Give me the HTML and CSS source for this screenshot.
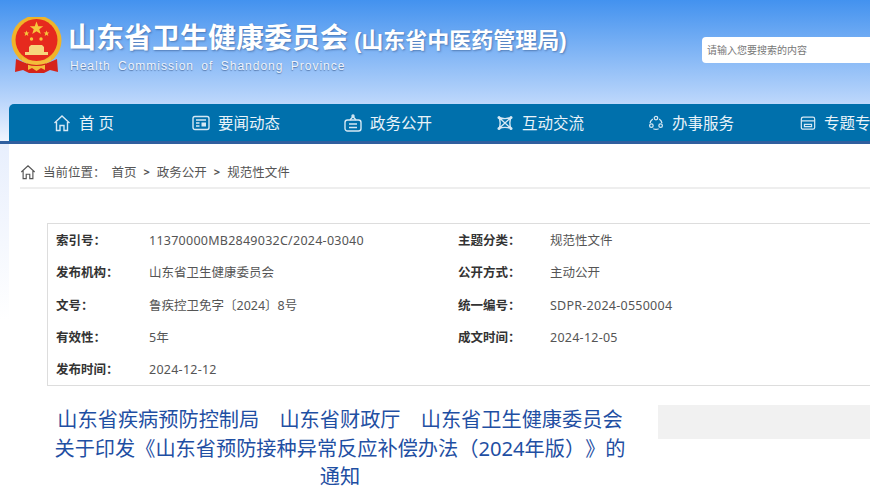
FILE: index.html
```html
<!DOCTYPE html>
<html lang="zh-CN">
  <head>
    <meta charset="UTF-8" />
    <title>山东省卫生健康委员会</title>
    <link rel="stylesheet" href="styles.css">
  </head>

  <body>
    <div class="header">
      <div class="brand">
        <svg class="emblem" viewBox="0 0 53 58" width="53" height="58">
          <circle cx="26.500" cy="23.500" r="25" fill="#f0b429" />
          <circle cx="26.500" cy="23" r="21" fill="#e62a1e" />
          <polygon points="26.500,4.500 28.300,9.200 33.300,9.200 29.300,12.300 30.800,17 26.500,14.200 22.200,17 23.700,12.300 19.700,9.200 24.700,9.200" fill="#f6c63c" />
          <polygon points="16.500,13.500 17.300,15.500 19.400,15.500 17.700,16.800 18.300,18.900 16.500,17.700 14.700,18.900 15.300,16.800 13.600,15.500 15.700,15.500" fill="#f6c63c" />
          <polygon points="36.500,13.500 37.300,15.500 39.400,15.500 37.700,16.800 38.300,18.900 36.500,17.700 34.700,18.900 35.300,16.800 33.600,15.500 35.700,15.500" fill="#f6c63c" />
          <circle cx="21.500" cy="22" r="1.700" fill="#f6c63c" />
          <circle cx="31" cy="22" r="1.700" fill="#f6c63c" />
          <path d="M21 28h11l2 2h-15zM19 30h15v5H19zM15 35h23v3H15z" fill="#f7d67c" />
          <path d="M6 42l7 3c4 2 9 2 13.500 2s9.500 0 13.500-2l7-3 1 13-8-2-6 3H19l-6-3-8 2z" fill="#d5231a" />
          <path d="M12 40c4 3 9 4 14.500 4s10.500-1 14.500-4v4l-6 3v6l-4-2-4.500 3-4.500-3-4 2v-6l-6-3z" fill="#f3bd3a" />
          <path d="M17 47c3 1 6 1.500 9.500 1.500s6.500-.5 9.500-1.500" fill="none" stroke="#d5231a" stroke-width="1.200" />
        </svg>
        <div class="brand-text">
          <div class="brand-name">山东省卫生健康委员会<span class="brand-sub">(山东省中医药管理局)</span></div>
          <div class="brand-en">Health Commission of Shandong Province</div>
        </div>
      </div>
      <div class="search">请输入您要搜索的内容</div>
    </div>

    <ul class="nav">
      <li class="nav-home">
        <svg viewBox="0 0 18 18" width="18" height="18"><path d="M1.500 9 9 2l7.500 7M3.500 8v8.500h3.500v-5h4v5h3.500V8" /></svg>
        <span>首 页</span>
      </li>
      <li>
        <svg viewBox="0 0 18 18" width="18" height="18"><rect x="1" y="2.500" width="16" height="13" rx="2" /><path d="M4 6h10M4 9h3.500M4 12h3.500" /><rect x="9.500" y="8.500" width="4.500" height="4" class="solid" /></svg>
        <span>要闻动态</span>
      </li>
      <li>
        <svg viewBox="0 0 18 18" width="18" height="18"><rect x="1" y="6" width="16" height="11" rx="2.500" /><path d="M6 6l3-3.500L12 6M5 10h8M5 13.500h8" /><circle cx="9" cy="2" r="1" /></svg>
        <span>政务公开</span>
      </li>
      <li>
        <svg viewBox="0 0 18 18" width="18" height="18"><path d="M3 3.500c4 1.500 8 1.500 12 0M3 14.500c4-1.500 8-1.500 12 0M3 3.500c1.500 3.500 1.500 7.500 0 11M15 3.500c-1.500 3.500-1.500 7.500 0 11M3 3.500l12 11M15 3.500 3 14.500" /><circle cx="3" cy="3.500" r="1.500" class="solid" /><circle cx="15" cy="3.500" r="1.500" class="solid" /><circle cx="3" cy="14.500" r="1.500" class="solid" /><circle cx="15" cy="14.500" r="1.500" class="solid" /></svg>
        <span>互动交流</span>
      </li>
      <li>
        <svg viewBox="0 0 18 18" width="16" height="16"><circle cx="9" cy="3.500" r="2" /><circle cx="3.800" cy="12" r="2" /><circle cx="14.200" cy="12" r="2" /><path d="M5.500 4.500A7 7 0 0 0 2.300 9M12.500 4.500a7 7 0 0 1 3.200 4.500M6 15.500a7 7 0 0 0 6 0" /></svg>
        <span>办事服务</span>
      </li>
      <li>
        <svg viewBox="0 0 18 18" width="16" height="16"><rect x="1.500" y="2.500" width="15" height="13.500" rx="2" /><path d="M1.500 6.500h15M5 10.500h8v2.500H5z" /></svg>
        <span>专题专栏</span>
      </li>
    </ul>

    <div class="main">
      <div class="crumb">
        <svg viewBox="0 0 18 18" width="16" height="16"><path d="M1.500 9 9 2l7.500 7M3.500 8v8.500h3.500v-5h4v5h3.500V8" /></svg>
        <span class="crumb-here">当前位置：</span>
        <span>首页</span><b>&gt;</b><span>政务公开</span><b>&gt;</b><span>规范性文件</span>
      </div>

      <div class="info">
        <label>索引号：</label><span class="num">11370000MB2849032C/2024-03040</span><label>主题分类：</label><span>规范性文件</span>
        <label>发布机构：</label><span>山东省卫生健康委员会</span><label>公开方式：</label><span>主动公开</span>
        <label>文号：</label><span>鲁疾控卫免字〔2024〕8号</span><label>统一编号：</label><span class="num">SDPR-2024-0550004</span>
        <label>有效性：</label><span>5年</span><label>成文时间：</label><span class="num">2024-12-05</span>
        <label>发布时间：</label><span class="num">2024-12-12</span>
      </div>

      <div class="article">
        <h1>山东省疾病预防控制局　山东省财政厅　山东省卫生健康委员会<br />关于印发《山东省预防接种异常反应补偿办法（2024年版）》的通知</h1>
        <div class="tools"></div>
      </div>
    </div>
  </body>
</html>
```

FILE: styles.css
```css
* {
  margin: 0;
  padding: 0;
  box-sizing: border-box;
}

html,
body {
  height: 492px;
  overflow: hidden;
}

body {
  width: 870px;
  background: linear-gradient(#4392ef, #b9d5fb 100px, #f0f5fe 141px, #2f5f9f 141px, #2f5f9f 144px, #e8effd 144px, #fff 320px);
  font-family: "Noto Sans", "Noto Sans CJK SC", sans-serif;
  font-size: 12.5px;
  color: #555;
}

.header {
  height: 104px;
  padding: 17px 0 0 10px;
  display: flex;
  justify-content: space-between;
}
.brand {
  display: flex;
  gap: 5px;
}
.emblem {
  flex: none;
}
.brand-name {
  height: 41px;
  margin-top: 1px;
  font-family: "Liberation Sans", "Noto Sans CJK SC", sans-serif;
  font-size: 28px;
  line-height: 41px;
  font-weight: 700;
  color: #fff;
  white-space: nowrap;
  text-shadow: 1px 1px 2px rgba(40, 70, 120, 0.5);
}
.brand-sub {
  margin-left: 6px;
  font-size: 22px;
}
.brand-en {
  margin-left: 2px;
  font-family: "Liberation Sans", sans-serif;
  font-size: 12px;
  line-height: 14px;
  letter-spacing: 1px;
  word-spacing: 3px;
  color: #eef3fa;
  text-shadow: 0 1px 1px rgba(40, 70, 120, 0.6);
}
.search {
  width: 168px;
  height: 26px;
  margin-top: 20px;
  padding-left: 5px;
  line-height: 26px;
  font-size: 10px;
  color: #777;
  background: #fff;
  border-radius: 4px 0 0 4px;
}

.nav {
  display: flex;
  width: 861px;
  height: 40px;
  margin-left: 9px;
  padding-left: 44px;
  list-style: none;
  background: #0070ac;
  border-radius: 5px 0 0 0;
  border-bottom: 3px solid #2f5f9f;
  color: #e9f3f9;
  font-size: 15.5px;
  overflow: hidden;
  white-space: nowrap;
}
.nav li {
  display: flex;
  align-items: center;
  gap: 8px;
  width: 152px;
  flex: none;
}
.nav .nav-home {
  width: 139px;
}
.nav svg {
  fill: none;
  stroke: #d5e8f4;
  stroke-width: 1.400;
}
.nav .solid {
  fill: #d5e8f4;
  stroke: none;
}

.main {
  margin-left: 9px;
  height: 348px;
  background: #fff;
}

.crumb {
  height: 45px;
  margin-left: 11px;
  padding-top: 12px;
  display: flex;
  align-items: center;
  border-bottom: 2px solid #eee;
  gap: 7px;
}
.crumb svg {
  fill: none;
  stroke: #555;
  stroke-width: 1.300;
}
.crumb-here {
  margin-right: -1px;
}
.crumb b {
  font-size: 11px;
}

.info {
  display: grid;
  grid-template-columns: 93px 309px 92px 1fr;
  grid-auto-rows: 32.300px;
  align-items: start;
  line-height: 32px;
  width: 860px;
  height: 163px;
  margin: 34px 0 0 38px;
  padding: 1px 0 0 8px;
  border: 1px solid #ddd;
}
.info label {
  font-weight: 700;
  color: #333;
}
.info .num {
  letter-spacing: 0.25px;
}

.article {
  display: flex;
  margin-top: 19px;
}
.article h1 {
  width: 580px;
  margin-left: 41px;
  font-size: 20.200px;
  line-height: 28.500px;
  font-weight: 400;
  text-align: center;
  color: #1f4fa3;
  text-spacing-trim: space-all;
}
.tools {
  width: 212px;
  height: 34px;
  margin-left: 28px;
  background: #f1f1f1;
}
```
